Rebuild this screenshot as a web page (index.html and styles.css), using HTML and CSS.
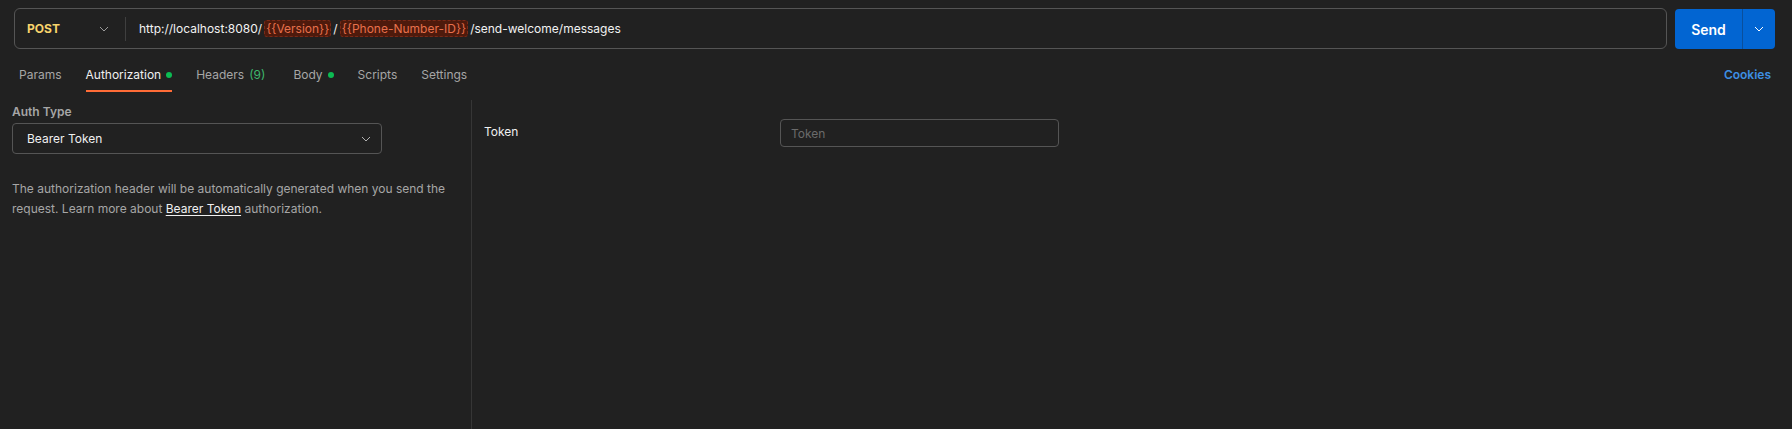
FILE: index.html
```html
<!DOCTYPE html>
<html>
<head>
<meta charset="utf-8">
<link rel="stylesheet" href="styles.css">
</head>
<body>
<div class="app">
  <div class="request-bar">
    <div class="url-box">
      <div class="method">
        <span class="method-name">POST</span>
        <svg class="chev" width="10" height="6" viewBox="0 0 10 6"><polyline points="1,1 5,5 9,1" fill="none" stroke="#9a9a9a" stroke-width="1"/></svg>
      </div>
      <div class="url">
        <span>http://localhost:8080/</span><span class="var">{{Version}}</span><span class="slash">/</span><span class="var">{{Phone-Number-ID}}</span><span>/send-welcome/messages</span>
      </div>
    </div>
    <div class="send">
      <span class="send-label">Send</span>
      <span class="send-drop">
        <svg width="10" height="6" viewBox="0 0 10 6"><polyline points="1,1 5,5 9,1" fill="none" stroke="#ffffff" stroke-width="1"/></svg>
      </span>
    </div>
  </div>

  <div class="tabs-row">
    <div class="tabs">
      <span class="tab">Params</span>
      <span class="tab active">Authorization <i class="dot"></i></span>
      <span class="tab headers">Headers <span class="count">(9)</span></span>
      <span class="tab">Body <i class="dot"></i></span>
      <span class="tab">Scripts</span>
      <span class="tab">Settings</span>
    </div>
    <span class="cookies">Cookies</span>
  </div>

  <div class="content">
    <div class="left">
      <div class="label">Auth Type</div>
      <div class="select">
        <span>Bearer Token</span>
        <svg width="10" height="6" viewBox="0 0 10 6"><polyline points="1,1 5,5 9,1" fill="none" stroke="#b0b0b0" stroke-width="1"/></svg>
      </div>
      <p class="desc">The authorization header will be automatically generated when you send the request. Learn more about <a class="link">Bearer Token</a> authorization.</p>
    </div>
    <div class="right">
      <div class="token-row">
        <span class="token-label">Token</span>
        <div class="token-input">Token</div>
      </div>
    </div>
  </div>
</div>
</body>
</html>
```

FILE: styles.css
```css
html, body {
  margin: 0;
  padding: 0;
  background: #212121;
  height: 100%;
}
body {
  font-family: Inter, "Noto Sans", sans-serif;
  color: #e6e6e6;
  font-size: 12px;
  overflow: hidden;
}
.app {
  display: flex;
  flex-direction: column;
  height: 429px;
}
.request-bar {
  display: flex;
  align-items: flex-start;
  gap: 8px;
  padding: 8px 17px 0 14px;
}
.url-box {
  flex: 1;
  height: 39px;
  border: 1px solid #555555;
  border-radius: 6px;
  display: flex;
  align-items: center;
}
.method {
  display: flex;
  align-items: center;
  justify-content: space-between;
  padding-left: 12px;
  padding-right: 16px;
  box-sizing: border-box;
  width: 111px;
  height: 24px;
  border-right: 1px solid #3f3f3f;
}
.method-name {
  color: #f8d46c;
  font-weight: 700;
  font-size: 12px;
}
.chev {
  margin-top: 1px;
}
.url {
  padding-left: 13px;
  color: #f2f2f2;
  font-size: 12px;
  display: flex;
  align-items: center;
  white-space: nowrap;
}
.var {
  color: #e8714c;
  background: #4e1a0c;
  border: 1px dashed #7a2a18;
  border-radius: 3px;
  padding: 0 1px;
  margin: 0 2px;
  line-height: 15px;
}
.send {
  width: 100px;
  height: 40px;
  margin-top: 1px;
  background: #0265d2;
  border-radius: 4px;
  display: flex;
  color: #ffffff;
}
.send-label {
  width: 67px;
  display: flex;
  align-items: center;
  justify-content: center;
  font-weight: 600;
  font-size: 14px;
  border-right: 1px solid #0a4f9c;
}
.send-drop {
  flex: 1;
  display: flex;
  align-items: center;
  justify-content: center;
}
.tabs-row {
  display: flex;
  align-items: flex-start;
  justify-content: space-between;
  padding: 0 21px 0 19px;
  margin-top: 18px;
  height: 33px;
  box-sizing: border-box;
}
.tabs {
  display: flex;
  gap: 24px;
}
.tab {
  color: #a6a6a6;
  font-size: 12px;
  line-height: 16px;
  padding-bottom: 7px;
  display: flex;
  align-items: center;
  gap: 5px;
  border-bottom: 2px solid transparent;
}
.tab.active {
  color: #f0f0f0;
  border-bottom-color: #ff6c37;
}
.tab.headers {
  margin-right: 4px;
}
.count {
  color: #3db76c;
}
.dot {
  display: inline-block;
  width: 6px;
  height: 6px;
  border-radius: 50%;
  background: #0cbb52;
}
.cookies {
  color: #3d8fe3;
  font-weight: 600;
  font-size: 12px;
  line-height: 16px;
}
.content {
  flex: 1;
  display: flex;
}
.left {
  width: 472px;
  border-right: 1px solid #363636;
  box-sizing: border-box;
  padding: 3px 12px 0 12px;
}
.label {
  color: #a6a6a6;
  font-weight: 600;
  font-size: 12px;
  line-height: 18px;
}
.select {
  margin-top: 2px;
  width: 370px;
  height: 31px;
  box-sizing: border-box;
  border: 1px solid #555555;
  border-radius: 4px;
  display: flex;
  align-items: center;
  justify-content: space-between;
  padding: 0 10px 0 14px;
  color: #f0f0f0;
  font-size: 12px;
}
.desc {
  margin: 25px 0 0 0;
  color: #a6a6a6;
  font-size: 12px;
  line-height: 20px;
  width: 440px;
}
.link {
  color: #f0f0f0;
  text-decoration: underline;
  text-underline-offset: 2px;
}
.right {
  flex: 1;
  padding: 19px 12px 0 12px;
}
.token-row {
  display: flex;
  align-items: center;
}
.token-label {
  width: 296px;
  color: #f0f0f0;
  font-size: 12px;
  margin-top: -4px;
}
.token-input {
  width: 279px;
  height: 28px;
  box-sizing: border-box;
  border: 1px solid #555555;
  border-radius: 4px;
  padding: 0 10px;
  display: flex;
  align-items: center;
  color: #6b6b6b;
  font-size: 12px;
}
```
